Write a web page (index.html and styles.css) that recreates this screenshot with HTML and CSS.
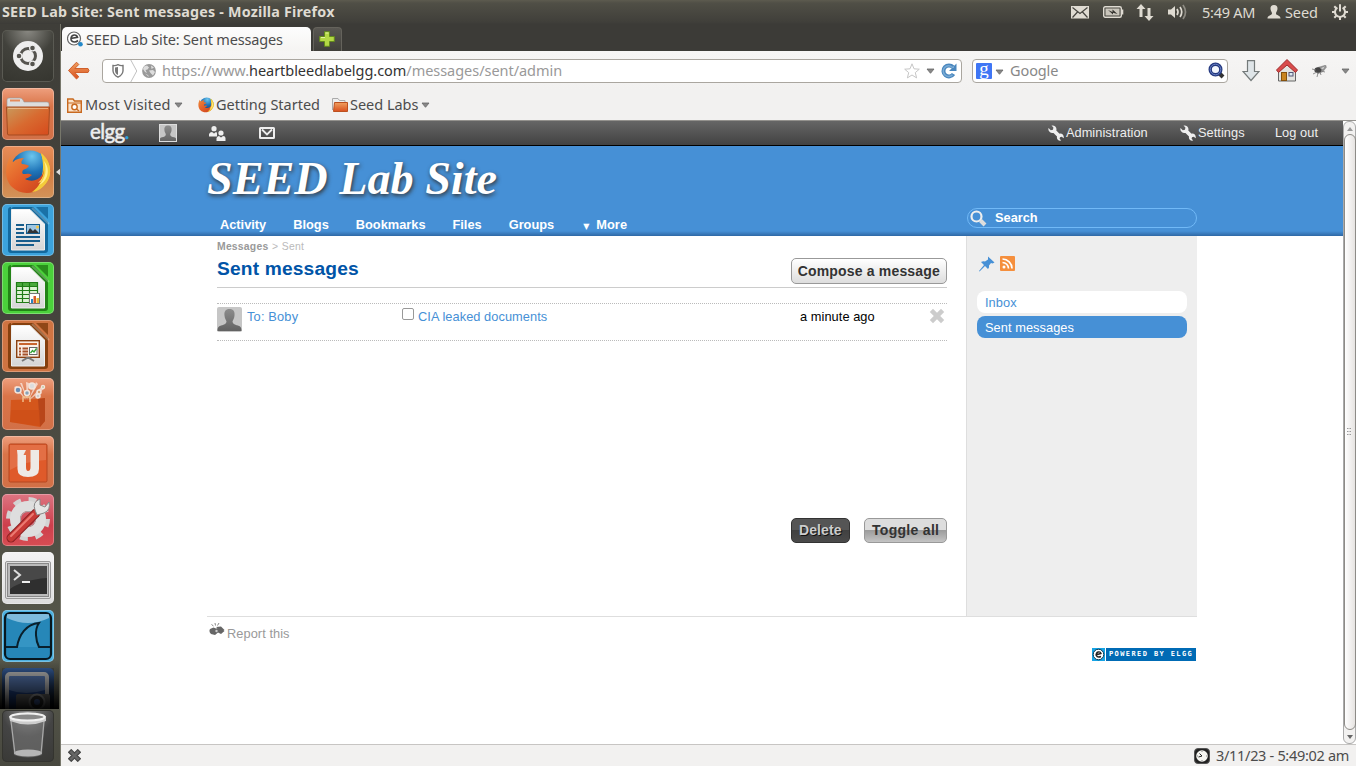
FILE: index.html
```html
<!DOCTYPE html>
<html lang="en">
<head>
<meta charset="utf-8">
<title>SEED Lab Site: Sent messages</title>
<link rel="stylesheet" href="styles.css">
</head>
<body>
<svg class="defs" width="0" height="0" aria-hidden="true">
  <defs>
    <linearGradient id="paper" x1="0" y1="0" x2="0" y2="1"><stop offset="0" stop-color="#fff"/><stop offset="1" stop-color="#d5d5d5"/></linearGradient>
    <linearGradient id="orange" x1="0" y1="0" x2="0" y2="1"><stop offset="0" stop-color="#f0a060"/><stop offset="1" stop-color="#d9501e"/></linearGradient>
    <linearGradient id="folder" x1="0" y1="0" x2="1" y2="1"><stop offset="0" stop-color="#c99a5c"/><stop offset=".5" stop-color="#d86a30"/><stop offset="1" stop-color="#d64a1c"/></linearGradient>
    <linearGradient id="fox" x1="0" y1="0" x2="1" y2="1"><stop offset="0" stop-color="#ee8a3c"/><stop offset=".5" stop-color="#e25e28"/><stop offset="1" stop-color="#c8401c"/></linearGradient>
    <radialGradient id="globe" cx=".55" cy=".15" r=".8"><stop offset="0" stop-color="#6cc6ee"/><stop offset=".5" stop-color="#1f74b8"/><stop offset="1" stop-color="#123a78"/></radialGradient>
    <linearGradient id="fade" x1="0" y1="0" x2="0" y2="1"><stop offset="0" stop-color="#000" stop-opacity=".15"/><stop offset="1" stop-color="#000" stop-opacity=".95"/></linearGradient>
    <linearGradient id="person" x1="0" y1="0" x2="0" y2="1"><stop offset="0" stop-color="#8c8c8c"/><stop offset="1" stop-color="#626262"/></linearGradient>
    <symbol id="firefox" viewBox="0 0 46 46">
      <circle cx="25" cy="21" r="19.500" fill="url(#globe)"/>
      <path d="M36 4C44 10 47 20 44 29C40 39 30 44 20 42C34 40 42 26 36 4Z" fill="#f6cf35"/>
      <path d="M5 8L8 13C11 10 15 9 19 9C16 12 16 14 17 15C20 15 23 16 24 17C23 19 20 20 18 21C17 23 17 24 18 25C21 25 24 24 27 26C25 28 22 29 20 30C26 33 33 32 37 26C39 23 39 20 39 17C43 27 41 35 34 40C26 46 14 45 7 38C-1 30 0 17 5 8Z" fill="url(#fox)"/>
      <path d="M38 8C42 16 41 27 33 34C43 31 46 18 38 8Z" fill="#ffe67a"/>
      <path d="M36 5C46 12 48 25 41 34C37 40 31 43 27 43C37 36 43 21 36 5Z" fill="#f4cb3a"/>
      <path d="M39 12C42 20 41 29 34 36C43 32 46 20 39 12Z" fill="#fff08f"/>
    </symbol>
    <symbol id="document" viewBox="0 0 52 52">
      <path d="M9 6Q9 3 12 3H31L46 18V46Q46 49 43 49H9Q6 49 6 46V6Q6 3 9 3Z" fill="currentColor"/>
      <path d="M9.500 5.500H28L42.500 20V46H9.500Z" fill="url(#paper)" stroke="#eee"/>
      <path d="M34 3H46V15Z" fill="currentColor" opacity=".85"/>
      <path d="M30 4L47 20" stroke="#fff" stroke-opacity=".25" stroke-width="2"/>
    </symbol>
    <symbol id="silhouette" viewBox="0 0 25 25"><rect width="25" height="25" rx="2" fill="#c6c6c6"/><path d="M12.500 2C16.500 2 18 4.500 17.500 8.500C17.300 11.500 16 12.500 15.500 14.500C16 17.500 18 17.500 21 18.500C24 19.500 24.500 21 24.500 24H.5C.5 21 1 19.500 4 18.500C7 17.500 9 17.500 9.500 14.500C9 12.500 7.700 11.500 7.500 8.500C7 4.500 8.500 2 12.500 2Z" fill="url(#person)"/></symbol>
    <symbol id="wrench" viewBox="0 0 16 16"><path d="M.5 3L2.800 5.200L5 4.800L5.400 2.500L3.500.5C6-.1 8.600 1.600 8.500 4.300L8.300 5.400L11.500 8.700C14 8 16.300 10.500 15.700 13.200L13.700 11.700L12 12.200L11.600 13.800L13.200 15.500C10.400 16.200 8.400 14 9 11.600L5.500 8C3 8.500-.4 6.200.5 3Z" fill="#eee"/></symbol>
    <symbol id="caret" viewBox="0 0 9 6"><path d="M1 1H8L4.500 5.300Z" fill="#888" stroke="#666" stroke-width=".8"/></symbol>
    <symbol id="shape-x" viewBox="0 0 16 16"><path d="M4 .8L8 4.800L12 .8L15.200 4L11.200 8L15.200 12L12 15.200L8 11.200L4 15.200L.8 12L4.800 8L.8 4Z"/></symbol>
  </defs>
</svg>
<div class="desktop">
  <header class="panel">
    <span class="panel-title">SEED Lab Site: Sent messages - Mozilla Firefox</span>
    <div class="indicators">
      <svg class="ind-mail" width="18" height="13" viewBox="0 0 18 13"><rect width="18" height="12.500" fill="#dfdbd2"/><path d="M1.500 1.500L9 7.500L16.500 1.500M1.500 11.500L6.500 6M16.500 11.500L11.500 6" fill="none" stroke="#45443f" stroke-width="1.200"/></svg>
      <svg class="ind-battery" width="21" height="12" viewBox="0 0 21 12"><rect x=".7" y=".7" width="17.600" height="10.600" rx="1.500" fill="none" stroke="#dfdbd2" stroke-width="1.400"/><rect x="2.500" y="2.500" width="14" height="7" fill="#c9c5bb"/><path d="M19.500 3.500V8.500" stroke="#dfdbd2" stroke-width="1.600"/><path d="M5 4L9.500 6L9.500 3.500L14.500 8L10 6.800L10 8.500Z" fill="#33322e"/></svg>
      <svg class="ind-net" width="18" height="17" viewBox="0 0 18 17"><path d="M5 0L9.500 5H6.500V13H3.500V5H.5ZM13 17L17.500 12H14.500V4H11.500V12H8.500Z" fill="#dfdbd2"/></svg>
      <svg class="ind-sound" width="20" height="16" viewBox="0 0 20 16"><path d="M0 5.500H3L7 2V14L3 10.500H0Z" fill="#dfdbd2"/><g fill="none" stroke="#dfdbd2" stroke-width="1.700"><path d="M9 5Q11 8 9 11"/><path d="M12 3Q15.500 8 12 13"/><path d="M15 1Q20 8 15 15" opacity=".45"/></g></svg>
      <span class="clock">5:49 AM</span>
      <svg class="ind-user" width="14" height="14" viewBox="0 0 14 14"><path d="M7 0C10 0 10.800 2 10.400 4.500C10 6.500 9 7 9 8.500C9 10.500 13.500 10 13.500 13.500H.5C.5 10 5 10.500 5 8.500C5 7 4 6.500 3.600 4.500C3.200 2 4 0 7 0Z" fill="#dfdbd2"/></svg>
      <span class="user">Seed</span>
      <svg class="ind-gear" width="16" height="16" viewBox="0 0 16 16"><g fill="none" stroke="#dfdbd2" stroke-width="2"><path d="M5.400 3.700A5 5 0 1 0 10.600 3.700"/><path d="M8 .3V7.500"/><path d="M0 8H3M13 8H16M8 13V16M2.300 13.700L4.300 11.700M13.700 13.700L11.700 11.700M2.300 2.300L4.300 4.300M13.700 2.300L11.700 4.300"/></g></svg>
    </div>
  </header>
  <div class="workspace">
    <nav class="launcher">
      <div class="tile t-dash"><svg viewBox="0 0 52 52"><circle cx="26" cy="26" r="15" fill="#eee"/><circle cx="26" cy="26" r="7.500" fill="none" stroke="#55544f" stroke-width="3"/><g fill="#55544f" stroke="#eee" stroke-width="1.200"><circle cx="17" cy="26" r="2.900"/><circle cx="30.500" cy="18" r="2.900"/><circle cx="30.500" cy="34" r="2.900"/></g></svg></div>
      <div class="tile t-files"><svg viewBox="0 0 52 52"><path d="M5 12Q5 10 7 10H18Q20 10 21 12L22 14H45Q47 14 47 16V20H5Z" fill="#ddd" stroke="#999" stroke-width=".6"/><path d="M8 12.500H18" stroke="#e58a5a" stroke-width="2"/><path d="M4.500 19H47.500L46.500 46Q46.500 47 45 47H7Q5.500 47 5.500 46Z" fill="url(#folder)" stroke="#a54b20"/><path d="M6 20.500H46" stroke="#f5c69b" stroke-opacity=".7"/></svg></div>
      <div class="tile t-firefox"><svg viewBox="0 0 52 52"><use href="#firefox" x="3" y="3" width="46" height="46"/></svg><i class="running"></i><i class="active"></i></div>
      <div class="tile t-writer"><svg viewBox="0 0 52 52"><use href="#document"/><path d="M14 21H22M14 25H22M14 29H22M14 33H38M14 37H38M14 41H32" stroke="#175d8c" stroke-width="2"/><rect x="24.500" y="20.500" width="13" height="9" fill="#9fc7e3" stroke="#175d8c"/><path d="M25 29L28 24L31 27L33 25L37 29Z" fill="#333"/><circle cx="35.500" cy="23" r="1.500" fill="#f6c443"/></svg></div>
      <div class="tile t-calc"><svg viewBox="0 0 52 52"><use href="#document"/><rect x="14" y="20" width="22" height="20" fill="#def3d4"/><rect x="14" y="20" width="22" height="4" fill="#4aa93c"/><path d="M14.500 20.500H35.500V40.500H14.500ZM14 24.500H36M14 28.500H36M14 32.500H36M14 36.500H36M20.500 20V40M27.500 20V40" fill="none" stroke="#207c16" stroke-width="1.200"/><rect x="27.500" y="31.500" width="10" height="10" fill="#fff" stroke="#777"/><path d="M29 41V37H31V41Z" fill="#2585c2"/><path d="M31.500 41V34H34V41Z" fill="#d75a2a"/><path d="M34.500 41V36H37V41Z" fill="#e9b830"/></svg></div>
      <div class="tile t-impress"><svg viewBox="0 0 52 52"><use href="#document"/><rect x="14.700" y="20.700" width="22.600" height="16.600" fill="#fbeee5" stroke="#8a4011" stroke-width="1.400"/><path d="M17 24H35" stroke="#c9652e" stroke-width="2"/><path d="M17 28.500H19M17 31.500H19M17 34.500H19M20.500 28.500H26M20.500 31.500H26M20.500 34.500H26" stroke="#a5512a" stroke-width="1.800"/><rect x="27.500" y="27.500" width="7.500" height="7" fill="#fff" stroke="#666"/><path d="M28.500 33L30.500 30.500L32 32L34.500 28.500" fill="none" stroke="#32a234" stroke-width="1.300"/><path d="M20 41L25 38H27L32 41" fill="none" stroke="#777" stroke-width="2"/></svg></div>
      <div class="tile t-store"><svg viewBox="0 0 52 52"><g fill="#fff" opacity=".6"><path d="M25 23L12 9L15 8ZM25 23L24 4L27 5ZM26 23L40 8L42 11ZM26 23L18 5L20 5ZM26 23L34 4L36 6Z"/></g><g stroke="#f3e5dc" stroke-width="1.500"><circle cx="16" cy="12" r="3" fill="#6a8db5"/><circle cx="30" cy="8" r="3" fill="#ddd"/><circle cx="25" cy="15" r="2.500" fill="#86a3b8"/><circle cx="37" cy="14" r="2" fill="#d8a57a"/><circle cx="41" cy="9" r="1.500" fill="#95b579"/><circle cx="36" cy="18" r="2" fill="#ccc"/></g><path d="M9 22L36 21L43 20L43 43L38 49L8 44Z" fill="#d4561c"/><path d="M36 21L43 20V43L38 49Z" fill="#b8461a"/><path d="M9 32L38 32V48L8 44Z" fill="#c94a14" opacity=".5"/><path d="M21 24V19H28V24" fill="none" stroke="#f2c391" stroke-width="1.400"/></svg></div>
      <div class="tile t-one"><svg viewBox="0 0 52 52"><rect x="7" y="8" width="38" height="38" rx="1.500" fill="#df5a2a" stroke="#b54620"/><path d="M8 9H44V24Q23 25 8 34Z" fill="#fff" opacity=".13"/><path d="M15 14H24L21.500 19H24V31Q24 35 26 35Q28.500 35 28.500 31V14H37V33Q37 41 26 41Q15.500 41 15.500 33V19Z" fill="#eeeae6"/></svg></div>
      <div class="tile t-settings"><svg viewBox="0 0 52 52"><circle cx="26" cy="25" r="19" fill="none" stroke="#d3d3d3" stroke-width="6" stroke-dasharray="7.461 7.461"/><circle cx="26" cy="25" r="13" fill="none" stroke="#dedede" stroke-width="10"/><circle cx="26" cy="25" r="7.500" fill="none" stroke="#aaa"/><path d="M9 44L34 19" stroke="#8c2022" stroke-width="9" stroke-linecap="round"/><path d="M9 44L34 19" stroke="#c83a37" stroke-width="7" stroke-linecap="round"/><path d="M9 42L31 20" stroke="#ec7a72" stroke-width="2" stroke-linecap="round"/><path d="M33 16Q30 8 38 5L38 11L43 13L47 8Q49 16 42 19L35 21Z" fill="#e5e5e5" stroke="#888"/></svg></div>
      <div class="tile t-terminal"><svg viewBox="0 0 52 52"><rect x="3.500" y="9.500" width="45" height="37" rx="1.500" fill="#ddd" stroke="#999"/><rect x="5.500" y="11.500" width="41" height="33" fill="#bbb" stroke="#888"/><rect x="8" y="14" width="37" height="28" fill="#2f2f2f"/><path d="M8 14H45V26Q20 28 8 37Z" fill="#fff" opacity=".12"/><path d="M12 18L18 23L12 28" fill="none" stroke="#ddd" stroke-width="2"/><path d="M20 30H28" stroke="#eee" stroke-width="2"/></svg><i class="running"></i></div>
      <div class="tile t-shark"><svg viewBox="0 0 52 52"><rect x="3" y="3" width="46" height="46" rx="5" fill="#2687b8" stroke="#07171f" stroke-width="2.200"/><path d="M5 4H47V8Q26 18 5 8Z" fill="#d5f0ff" opacity=".5"/><path d="M4 37H15C17 25 24 14 37 13C32 20 34 31 37 37H48" fill="#3595c4" stroke="#09202c" stroke-width="2"/></svg></div>
      <div class="tile t-shot"><svg viewBox="0 0 52 41"><rect x="5" y="6" width="40" height="41" rx="3" fill="#1d3c78" stroke="#aaa" stroke-width="4"/><path d="M7 8H43V22Q24 28 7 22Z" fill="#a3bad9" opacity=".35"/><rect x="14" y="26" width="34" height="24" rx="2" fill="#666"/><circle cx="35" cy="34" r="7.500" fill="#333" stroke="#999" stroke-width="2"/><circle cx="35" cy="34" r="3" fill="#4a6bb1"/><rect width="52" height="41" fill="url(#fade)"/></svg></div>
      <div class="tile t-trash"><svg viewBox="0 0 52 52"><path d="M8 8L12 45Q26 50 40 45L43 8Z" fill="#888" opacity=".45"/><ellipse cx="26" cy="43" rx="14" ry="3.500" fill="#ccc" opacity=".8"/><path d="M9 11L13 44M42 11L39 44" stroke="#aaa" stroke-width="1.200"/><path d="M7 6Q26-1 44 6V11Q26 18 8 11Z" fill="#ccc"/><ellipse cx="25.500" cy="7" rx="17" ry="3.500" fill="#888" stroke="#f0f0f0" stroke-width="2"/></svg></div>
    </nav>

    <div class="browser">
      <div class="tabs">
        <div class="tab"><svg width="16" height="16" viewBox="0 0 16 16"><circle cx="7" cy="7.500" r="6.500" fill="#fff" stroke="#666" stroke-width="1.200"/><path d="M3.500 7.500L10.500 6.300Q10 3.800 7 4Q4 4.500 4 8Q4.300 11 7.500 11Q9.500 10.800 11 9.500" fill="none" stroke="#444" stroke-width="1.700"/><circle cx="13.500" cy="13.200" r="2.300" fill="#2389c9"/></svg><span>SEED Lab Site: Sent messages</span></div>
        <div class="new-tab"><svg width="16" height="16" viewBox="0 0 16 16"><path d="M5.500.7H10.500V5.500H15.300V10.500H10.500V15.300H5.500V10.500H.7V5.500H5.500Z" fill="#b4d845" stroke="#638a1c"/><path d="M6.500 2H9.500M2 6.500H6" stroke="#e3f3a4"/></svg></div>
      </div>
      <div class="toolbar">
        <svg class="back" width="24" height="20" viewBox="0 0 24 20"><path d="M9.500 1.200L1.500 9.500L9.500 18L11.800 15.800L7.800 11.500H21Q23 9.500 21 7.500H7.800L11.800 3.500Z" fill="url(#orange)" stroke="#d0602c"/></svg>
        <div class="urlbar">
          <svg class="shield" width="12" height="14" viewBox="0 0 12 14"><path d="M1 1.500Q3.500 2 6 .7Q8.500 2 11 1.500V7Q10.500 11 6 13.200Q1.500 11 1 7Z" fill="none" stroke="#777" stroke-width="1.400"/><path d="M6 3V11Q3 9.500 3 6.500V3.500Z" fill="#777"/></svg>
          <svg class="chevron" width="8" height="24" viewBox="0 0 8 24"><path d="M.5 0L7 12L.5 24" fill="none" stroke="#bbb"/></svg>
          <svg class="world" width="14" height="14" viewBox="0 0 14 14"><circle cx="7" cy="7" r="6.900" fill="#999"/><path d="M2 2.500L5 1.500L7 3.500L5.500 5.500L3.500 6L5 9L3 8L1 5ZM9 1.500L12 3.500L9.500 5ZM7 6.500L11 6L13 8L11 11.500L8.500 9ZM3 9.500L6 11L7 13Z" fill="#ddd"/></svg>
          <span class="url">https://www.<b>heartbleedlabelgg.com</b>/messages/sent/admin</span>
          <svg class="star" width="16" height="16" viewBox="0 0 16 16"><path d="M8 .8L10 5.800L15.300 6.200L11.300 9.600L12.600 14.900L8 12L3.400 14.900L4.700 9.600L.7 6.200L6 5.800Z" fill="#fff" stroke="#c6c6c6"/></svg>
          <svg class="caret" width="9" height="6"><use href="#caret"/></svg>
          <svg class="reload" width="16" height="16" viewBox="0 0 16 16"><path d="M12.500 11A5.500 5.500 0 1 1 12 4.200" fill="none" stroke="#4a87be" stroke-width="4"/><path d="M15.500.5V8H8L11 5Z" fill="#4a87be"/><path d="M11.500 11.700A5.300 5.300 0 1 1 11.200 4.300L13 4.300" fill="none" stroke="#79abd5" stroke-width="1.500"/></svg>
        </div>
        <div class="searchbar">
          <span class="g-logo">g</span>
          <svg class="caret" width="9" height="6"><use href="#caret"/></svg>
          <span class="placeholder">Google</span>
          <svg width="17" height="17" viewBox="0 0 17 17"><path d="M11 11L15 15" stroke="#333" stroke-width="4"/><circle cx="7.500" cy="7.500" r="5.300" fill="#f2f6fd" stroke="#24387f" stroke-width="3.400"/><circle cx="7.500" cy="7.500" r="5.300" fill="none" stroke="#6b83c7" stroke-width="1"/></svg>
        </div>
        <svg class="download" width="18" height="22" viewBox="0 0 18 22"><path d="M5.500.700H12.500V11.500H17L9 20.500L1 11.500H5.500Z" fill="#dfe5e8" stroke="#747a7a" stroke-width="1.200"/></svg>
        <svg class="home" width="22" height="23" viewBox="0 0 22 23"><path d="M2.500 10L11 3L19.500 10V22H2.500Z" fill="#e4e4df" stroke="#666"/><path d="M.5 11L11 .5L21.500 11L19.500 13.500L11 6L2.500 13.500Z" fill="#d94c4c" stroke="#9f2d2d"/><rect x="5.500" y="13.500" width="5" height="8" fill="#c9851f" stroke="#85520e"/><rect x="13" y="13.500" width="4" height="3.500" fill="#dce9ef" stroke="#557"/></svg>
        <svg class="bug" width="16" height="14" viewBox="0 0 16 14"><path d="M2 7L6 3L13 1L15 3L11 8L6 10Z" fill="#999"/><ellipse cx="6" cy="6" rx="3.500" ry="2.800" fill="#444"/><path d="M0 5L4 6M1 10L5 8M5 13L6 9M9 11L8 8M13 8L9 7" stroke="#777" stroke-width=".8"/><path d="M8 4L14 1.500L11 6Z" fill="#ccc" stroke="#777" stroke-width=".6"/></svg>
        <svg class="more" width="9" height="6"><use href="#caret"/></svg>
      </div>
      <div class="bookmarks">
        <svg class="bm-icon" width="15" height="15" viewBox="0 0 15 15"><path d="M.700 1H6L7.500 3H14.300V14.300H.7Z" fill="#fbe3ca" stroke="#c8691f" stroke-width="1.400"/><path d="M1 5H14" stroke="#c8691f"/><circle cx="7.500" cy="9" r="2.700" fill="#fff" stroke="#c8691f" stroke-width="1.400"/><path d="M9.500 11L12 13" stroke="#c8691f" stroke-width="1.500"/></svg>
        <span class="bm-most">Most Visited</span><svg class="caret c1" width="9" height="6"><use href="#caret"/></svg>
        <svg class="bm-fox" width="16" height="16"><use href="#firefox"/></svg><span class="bm-start">Getting Started</span>
        <svg class="bm-folder" width="16" height="14" viewBox="0 0 16 14"><path d="M.5 12V.5H6L7.500 2.500H13V5" fill="#eee" stroke="#aaa"/><path d="M2.500 4.500H15.500V13.500H1.500Z" fill="url(#orange)" stroke="#bc501f"/></svg><span class="bm-labs">Seed Labs</span><svg class="caret c2" width="9" height="6"><use href="#caret"/></svg>
      </div>
      <div class="viewport">
        <main class="page">
          <div class="topbar">
            <span class="elgg-logo">elgg<em>.</em></span>
            <svg class="tb-avatar" width="18" height="18" viewBox="0 0 25 25"><use href="#silhouette"/><rect x=".7" y=".7" width="23.600" height="23.600" fill="none" stroke="#ddd" stroke-width="1.400"/></svg>
            <svg class="tb-friends" width="17" height="15" viewBox="0 0 17 15"><g fill="#eee"><circle cx="5" cy="2.700" r="2.600"/><path d="M0 10.500V8Q1 6 3 6L5 7.500L7 6Q8 6 8 7.500V10.500Z"/><circle cx="12" cy="7" r="2.600"/><path d="M7.500 15V12Q8.500 10 10 10L12 11.500L14 10Q16.500 10 16.500 12V15Z"/></g></svg>
            <svg class="tb-mail" width="16" height="12" viewBox="0 0 16 12"><rect x="1" y="1" width="14" height="10" rx=".5" fill="none" stroke="#eee" stroke-width="2"/><path d="M3 2.500L8 7.500L13 2.500" fill="none" stroke="#eee" stroke-width="1.800"/></svg>
            <div class="tb-right"><svg width="16" height="16"><use href="#wrench"/></svg><span class="tb-admin">Administration</span><svg width="16" height="16"><use href="#wrench"/></svg><span class="tb-settings">Settings</span><span>Log out</span></div>
          </div>
          <div class="site-header"><div class="inner">
            <h1>SEED Lab Site</h1>
            <div class="header-row">
              <ul class="site-menu"><li>Activity</li><li>Blogs</li><li>Bookmarks</li><li>Files</li><li>Groups</li><li class="more-item"><small>▼</small>More</li></ul>
              <div class="site-search"><svg width="17" height="17" viewBox="0 0 17 17"><circle cx="6.500" cy="6.500" r="5" fill="none" stroke="#eee" stroke-width="2.200"/><path d="M10.500 10.500L15 15" stroke="#ddd" stroke-width="4"/></svg><span>Search</span></div>
            </div>
          </div></div>
          <div class="layout">
            <section class="content">
              <div class="crumbs"><b>Messages</b> &gt; Sent</div>
              <div class="title-row"><h2>Sent messages</h2><span class="button">Compose a message</span></div>
              <div class="message">
                <svg class="avatar" width="25" height="25"><use href="#silhouette"/></svg>
                <a class="to">To: Boby</a><i class="check"></i><a class="subject">CIA leaked documents</a><span class="time">a minute ago</span>
                <svg class="delete-x" width="16" height="16" fill="#ccc"><use href="#shape-x"/></svg>
              </div>
              <div class="actions"><span class="button delete">Delete</span><span class="button toggle">Toggle all</span></div>
            </section>
            <aside class="sidebar">
              <div class="extras"><svg width="16" height="16" viewBox="0 0 16 16"><path d="M9 .5L15.500 6.500L13.500 7.500L12 7L10 9.500Q10.500 11.500 9 13L6 10L.5 15.500L0 15L5 9L2 6Q4 5 6 5.500L9 3.500Z" fill="#4690d6"/></svg><svg width="15" height="15" viewBox="0 0 15 15"><rect width="15" height="15" rx="1" fill="#f58f3d"/><circle cx="4" cy="11" r="1.500" fill="#fff"/><path d="M2.500 6.500A6 6 0 0 1 8.500 12.500M2.500 3A9.500 9.500 0 0 1 12 12.500" fill="none" stroke="#fff" stroke-width="1.700"/></svg></div>
              <a>Inbox</a><a class="selected">Sent messages</a>
            </aside>
          </div>
          <footer class="footer">
            <div class="report"><svg width="16" height="14" viewBox="0 0 16 14"><path d="M1 7L4.500 5.500L7 6.500L9 6L15.500 9L12 12L9 10.500L6 13L2 12Q-.5 9.500 1 7Z" fill="#666"/><circle cx="7.500" cy="9" r="1.200" fill="#ccc"/><path d="M7 5L12 4.500L15.500 8L13 10Z" fill="#666"/><path d="M6.500 3.500L6 1M4.500 4L2.500 2.500M8.500 3.500L10 1" stroke="#888"/></svg><span>Report this</span></div>
            <div class="powered"><span class="p-icon"><svg width="13" height="13" viewBox="0 0 13 13"><circle cx="6.500" cy="6.500" r="5.300" fill="#fff" stroke="#063552"/><path d="M3.500 7L9 5.500Q8.500 3.500 6.200 4Q4 4.700 4.200 7.500Q5.500 9.800 9 8.500" fill="none" stroke="#222" stroke-width="1.400"/></svg></span><span class="p-text">POWERED BY ELGG</span></div>
          </footer>
        </main>
        <div class="scrollbar"><i class="up"></i><div class="thumb"><svg width="5" height="8" viewBox="0 0 5 8"><path d="M0 .5H1.500M2.500 .5H4M0 3.500H1.500M2.500 3.500H4M0 6.500H1.500M2.500 6.500H4" stroke="#999"/></svg></div><i class="down"></i></div>
      </div>
      <div class="status"><svg width="13" height="13" viewBox="0 0 16 16" fill="#666" stroke="#444" stroke-width="1.400"><use href="#shape-x" width="16" height="16"/></svg><div class="date"><svg width="16" height="16" viewBox="0 0 16 16"><rect x=".5" y=".5" width="15" height="15" rx="3.500" fill="#222" stroke="#555"/><circle cx="8" cy="8" r="5.800" fill="#f6f6f2"/><path d="M8 8L4.500 9M8 8L5.500 5.500" stroke="#222"/><path d="M8 3V4M8 12V13M3 8H4M12 8H13" stroke="#888"/></svg><span>3/11/23 - 5:49:02 am</span></div></div>
    </div>
  </div>
</div>
</body>
</html>
```
FILE: styles.css
```css
* { box-sizing: border-box; }
body { margin: 0; overflow: hidden; background: #3c3b37; }
svg { display: block; flex: none; }
.defs { position: absolute; }
.desktop { width: 1356px; height: 766px; display: flex; flex-direction: column; font: 14.5px/20px "Noto Sans", sans-serif; color: #4c4c4c; white-space: nowrap; }

.panel { height: 24px; flex: none; display: flex; align-items: center; justify-content: space-between; background: linear-gradient(#5d5b4f 0, #504f46 3px, #403f3a 22px, #3c3b37); color: #dfdbd2; }
.panel-title { padding-left: 2px; font-weight: 700; font-size: 14.3px; letter-spacing: .2px; }
.indicators { display: flex; align-items: center; padding-right: 8px; }
.ind-battery { margin-left: 14px; }
.ind-net { margin-left: 12px; }
.ind-sound { margin-left: 14px; }
.clock { width: 54px; margin-left: 14px; letter-spacing: -.25px; }
.ind-user { margin-left: 11px; }
.user { width: 34px; margin-left: 4px; letter-spacing: -.1px; }
.ind-gear { margin-left: 13px; }

.workspace { flex: 1; min-height: 0; display: flex; }
.launcher { width: 61px; flex: none; padding: 6px 0 0 2px; display: flex; flex-direction: column; gap: 6px; background: linear-gradient(#3f3e39, #45443d 40%, #57584b 88%, #48483f); border-right: 1px solid #77776b; overflow: hidden; }
.tile { position: relative; width: 52px; height: 52px; flex: none; border-radius: 5px; box-shadow: inset 0 0 0 1px rgba(255,255,255,.28); }
.tile svg { width: 52px; height: 52px; }
.t-dash { background: radial-gradient(circle at 50% 0, #8a8983, #42423c 45%, #35352f); box-shadow: inset 0 0 0 1px #5a5a53; }
.t-files, .t-store, .t-one { background: linear-gradient(#ee9f7e, #d97448 35%, #d27047); }
.t-firefox { background: linear-gradient(#e98d58, #d47b42 50%, #d29359); }
.t-writer { background: #3ca3dc; color: #14699d; }
.t-calc { background: #4bd13b; color: #238317; }
.t-impress { background: #cf7442; color: #85400f; }
.t-settings { background: linear-gradient(#dd7582, #cd3f4c 60%, #d74d53); }
.t-terminal { background: linear-gradient(#f4f4f4, #ddd); }
.t-shark { background: #4db1e0; }
.t-shot { height: 41px; background: #3c69af; border-radius: 5px 5px 0 0; box-shadow: none; }
.t-shot svg { position: relative; height: 41px; overflow: hidden; }
.t-shot::before { content: ""; position: absolute; left: -2px; top: -8px; width: 59px; height: 49px; background: linear-gradient(transparent, #000); }
.t-trash { margin-top: -5px; background: radial-gradient(circle at 50% 0, #888, #444 45%, #393936); box-shadow: inset 0 0 0 1px #34342f; }
.running, .active { position: absolute; top: 22px; border: 4px solid transparent; }
.running { left: -6px; border-left-color: #ddd; }
.active { right: -7px; border-width: 4px 5px; border-right-color: #ddd; border-left: 0; }

.browser { flex: 1; min-width: 0; display: flex; flex-direction: column; }
.tabs { height: 27px; flex: none; display: flex; align-items: flex-end; background: #3c3b37; padding-left: 1px; }
.tab { width: 249px; height: 24px; display: flex; align-items: center; gap: 3px; padding-left: 5px; background: linear-gradient(#fdfdfd, #f5f4f2); border-radius: 5px 5px 0 0; letter-spacing: -.17px; }
.new-tab { width: 29px; height: 24px; margin-left: 2px; padding: 3px 6px 3px 5px; background: linear-gradient(#595752, #403f3a); border: 1px solid #65635c; border-bottom: 0; border-radius: 4px 4px 0 0; }
.toolbar { height: 39px; flex: none; display: flex; align-items: center; padding: 0 6px; background: linear-gradient(#f6f5f4, #f2f1f0); }
.urlbar, .searchbar { height: 24px; flex: none; display: flex; align-items: center; background: #fff; border: 1px solid #aaa69f; border-radius: 4px; }
.urlbar { width: 860px; margin-left: 11px; }
.shield { margin-left: 9px; }
.chevron { margin-left: 6px; height: 22px; }
.world { margin-left: 4px; }
.url { margin: -1px 0 0 6px; flex: 1; color: #999; letter-spacing: -.04px; }
.url b { font-weight: 400; color: #333; }
.star { margin-right: 6px; margin-left: 2px; }
.reload { margin: 0 4px 0 6px; }
.searchbar { width: 256px; margin-left: 10px; padding: 0 2px 0 3px; }
.g-logo { width: 16px; height: 16px; background: #3f76f5; color: #fff; font: 19px/12px "Liberation Serif", serif; text-align: center; border-radius: 1px; }
.searchbar .caret { margin: 2px 6px 0 3px; }
.placeholder { flex: 1; margin-top: -1px; color: #888; letter-spacing: -.1px; }
.download { margin-left: 14px; }
.home { margin-left: 16px; }
.bug { margin-left: 14px; }
.more { margin-left: 13px; }
.bookmarks { height: 31px; flex: none; display: flex; align-items: center; padding-left: 6px; background: #f2f1f0; border-bottom: 1px solid #93918d; }
.bookmarks span { margin-top: -2px; }
.bookmarks .bm-most { width: 87px; margin-left: 3px; letter-spacing: .2px; }
.c1 { margin-left: 2px; }
.bm-fox { margin-left: 15px; }
.bookmarks .bm-start { width: 104px; margin-left: 2px; letter-spacing: -.02px; }
.bm-folder { margin-left: 12px; }
.bookmarks .bm-labs { width: 69px; margin-left: 2px; letter-spacing: -.02px; }
.c2 { margin-left: 2px; }

.viewport { flex: 1; min-height: 0; display: flex; background: #fff; }
.page { width: 1282px; font: 12.8px/18px "Liberation Sans", Arial, sans-serif; color: #000; letter-spacing: .06px; }
.topbar { height: 25px; display: flex; align-items: center; background: linear-gradient(#666, #424242); border-bottom: 1px solid #000; padding: 0 25px 0 29px; color: #eee; }
.elgg-logo { width: 38px; font: 20.5px/20px Lato, sans-serif; letter-spacing: -.6px; margin-top: -4px; color: #eee; -webkit-text-stroke: .5px #eee; }
.elgg-logo em { font-style: normal; color: #2ca3e0; -webkit-text-stroke: .5px #2ca3e0; }
.tb-avatar { margin-left: 31px; }
.tb-friends { margin-left: 32px; }
.tb-mail { margin-left: 33px; }
.tb-right { margin-left: auto; display: flex; align-items: center; gap: 2px; }
.tb-admin { width: 82px; margin-right: 30px; }
.tb-settings { width: 48px; margin-right: 27px; }
.site-header { height: 90px; background: linear-gradient(#4690d6 85px, #2f68a5); }
.inner { width: 990px; height: 90px; margin: auto; display: flex; flex-direction: column; }
h1 { margin: 0; height: 62px; font: italic bold 46.2px/66px "Liberation Serif", serif; letter-spacing: 0; color: #fff; text-shadow: 1px 2px 4px #333; }
.header-row { height: 20px; display: flex; justify-content: space-between; color: #fff; font-weight: 700; letter-spacing: 0; }
.site-menu { list-style: none; margin: 0; padding: 8px 0 0; display: flex; }
.site-menu li { padding: 0 13px; margin-right: 1px; }
.site-menu .more-item { margin-left: 2px; letter-spacing: .1px; }
.site-menu small { display: inline-block; width: 13px; font: 8px/10px "DejaVu Sans", sans-serif; }
.site-search { width: 230px; height: 20px; display: flex; align-items: center; padding-left: 2px; gap: 8px; border: 1px solid #71b9f7; border-radius: 10px; }
.layout { width: 990px; height: 381px; margin: auto; display: flex; border-bottom: 1px solid #dedede; }
.content { flex: 1; padding: 3px 19px 0 10px; display: flex; flex-direction: column; }
.crumbs { height: 15px; font-size: 10.4px; line-height: 15px; letter-spacing: .22px; word-spacing: .4px; color: #bababa; }
.crumbs b { color: #999; }
.title-row { height: 34px; margin-bottom: 15px; display: flex; justify-content: space-between; border-bottom: 1px solid #ccc; }
h2 { margin: 3px 0 0; font-size: 19.2px; line-height: 24px; letter-spacing: .16px; color: #0054a7; }
.button { height: 26px; margin-top: 4px; padding: 0 6px; border: 1px solid #999; border-radius: 5px; background: linear-gradient(#fff, #ddd); font-size: 14px; font-weight: 700; line-height: 24px; letter-spacing: .18px; color: #333; }
.message { height: 38px; padding-top: 3px; display: flex; border-top: 1px dotted #bbb; border-bottom: 1px dotted #bbb; }
.message a { color: #4690d6; }
.to { width: 155px; margin-left: 5px; padding-top: 1px; letter-spacing: .18px; }
.check { width: 12px; height: 12px; margin-top: 1px; border: 1px solid #999; border-radius: 2px; }
.subject { width: 382px; margin-left: 4px; padding-top: 1px; }
.time { flex: 1; padding-top: 1px; }
.delete-x { margin-right: 2px; margin-top: 1px; }
.actions { display: flex; justify-content: flex-end; gap: 14px; margin-top: 173px; }
.delete, .toggle { padding: 0 7px; line-height: 23px; }
.delete { width: 59px; height: 25px; letter-spacing: .1px; color: #ccc; border-color: #333; text-shadow: 1px 1px #111; background: linear-gradient(#555 46%, #404040 46%, #4a4a4a); }
.toggle { width: 83px; height: 25px; letter-spacing: .3px; background: linear-gradient(#ddd 46%, #999 46%, #c4c4c4); }
.sidebar { width: 231px; padding: 20px 10px 0; background: #eee; border-left: 1px solid #dedede; }
.sidebar a { display: block; height: 22px; line-height: 24px; padding: 0 8px; margin-bottom: 3px; background: #fff; color: #4690d6; border-radius: 8px; }
.sidebar .selected { background: #4690d6; color: #fff; }
.extras { display: flex; gap: 5px; height: 35px; padding-left: 2px; }
.footer { width: 990px; margin: auto; padding: 5px 1px 0 2px; }
.report { display: flex; gap: 2px; height: 26px; color: #999; }
.report span { padding-top: 3px; }
.powered { margin-left: auto; width: 104px; height: 13px; display: flex; gap: 1px; }
.p-icon { width: 13px; background: #16a4e5; }
.p-text { width: 90px; padding-left: 3px; background: #006bb5; color: #fff; font: bold 7px/13px "DejaVu Sans Mono", monospace; letter-spacing: 1.4px; }

.scrollbar { width: 13px; display: flex; flex-direction: column; align-items: center; background: #f2f1f0; border: 1px solid #aaa; border-radius: 6px; }
.thumb { flex: 1; width: 12px; border: 1px solid #8d8b87; border-radius: 6px; background: linear-gradient(90deg, #fff, #e6e3e1); display: flex; align-items: center; justify-content: center; }
.up, .down { height: 0; width: 0; border: 3px solid transparent; }
.up { border-top: 0; border-bottom: 4px solid #999; margin: 5px 0 3px; }
.down { border-bottom: 0; border-top: 4px solid #666; margin: 5px 0 4px; }
.status { height: 22px; flex: none; display: flex; align-items: center; justify-content: space-between; padding: 0 7px 0 7px; background: #f2f1f0; border-top: 1px solid #c7c5c3; }
.date { display: flex; align-items: center; gap: 6px; letter-spacing: -.31px; }
.date span { margin-top: -1px; }
```
